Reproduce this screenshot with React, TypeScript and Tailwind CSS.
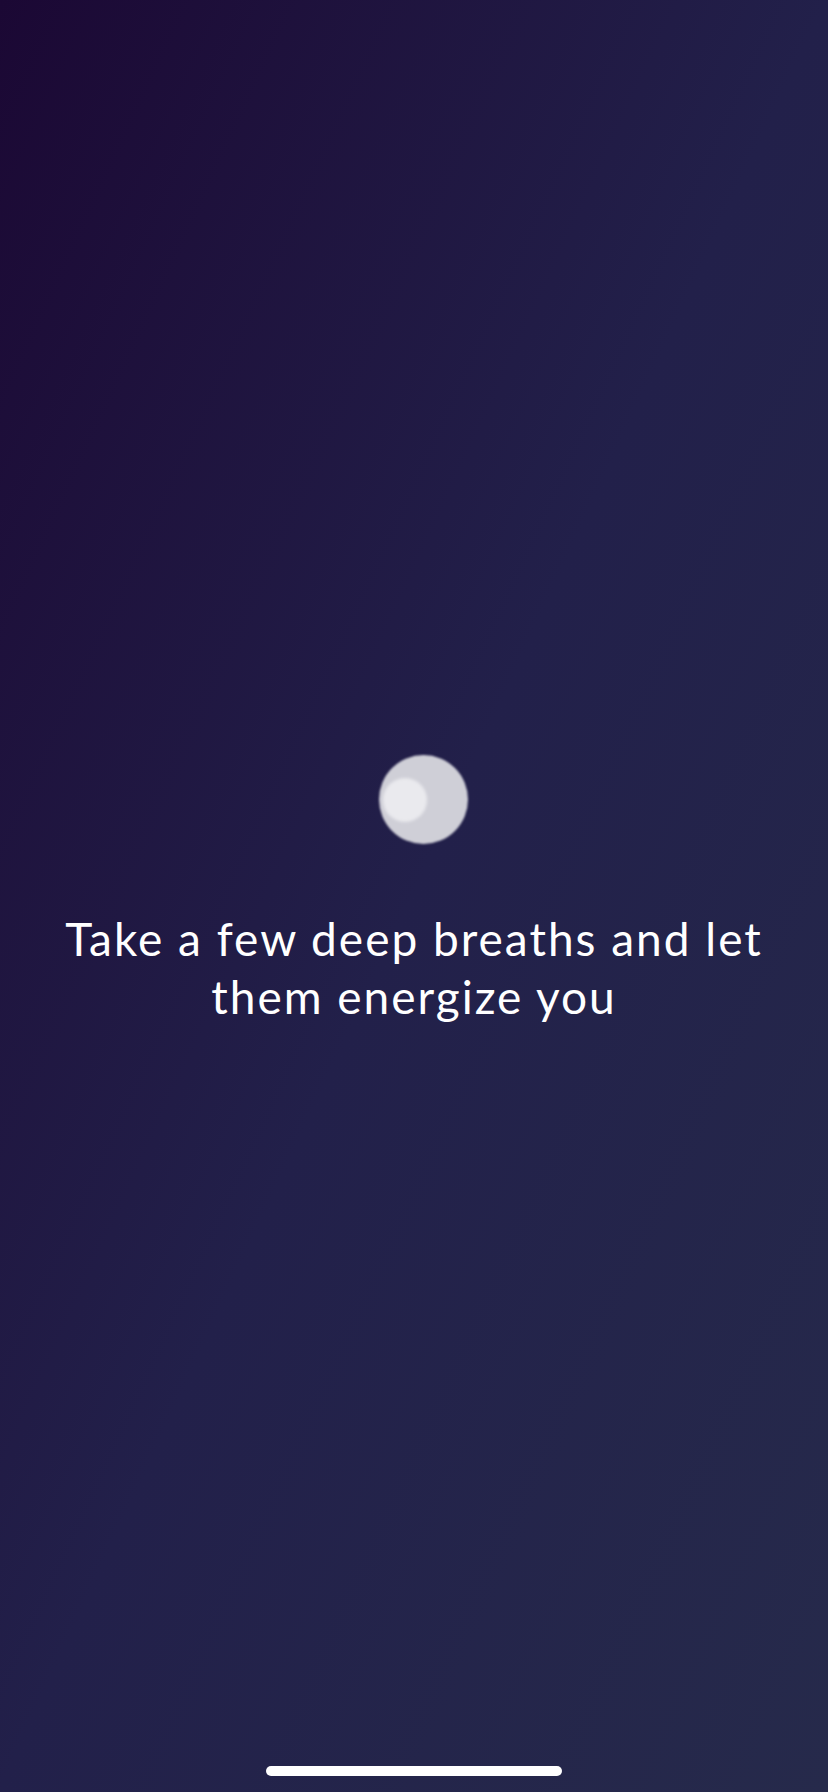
import React from 'react';

const Orb: React.FC = () => (
  <div className="w-[89px] h-[89px] rounded-full bg-[#cfcfd7] flex items-center pl-[4px] blur-[1.2px]">
    <div className="w-[44px] h-[44px] rounded-full bg-[#eaeaee] blur-[1px]" />
  </div>
);

const App: React.FC = () => {
  return (
    <div className="h-screen w-full overflow-hidden flex flex-col items-center bg-linear-to-br from-[#1b0834] via-[#22204a] to-[#262a4b] font-['Lato','Noto_Sans',sans-serif]">
      <div className="pt-[755px] ml-[18px]">
        <Orb />
      </div>
      <p className="mt-[66px] px-[30px] text-center text-white text-[46px] leading-[58px] tracking-[2px]">
        Take a few deep breaths and let
        <br />
        them energize you
      </p>
      <div className="mt-auto mb-[16px] w-[296px] h-[10px] rounded-full bg-white" />
    </div>
  );
};

export default App;
